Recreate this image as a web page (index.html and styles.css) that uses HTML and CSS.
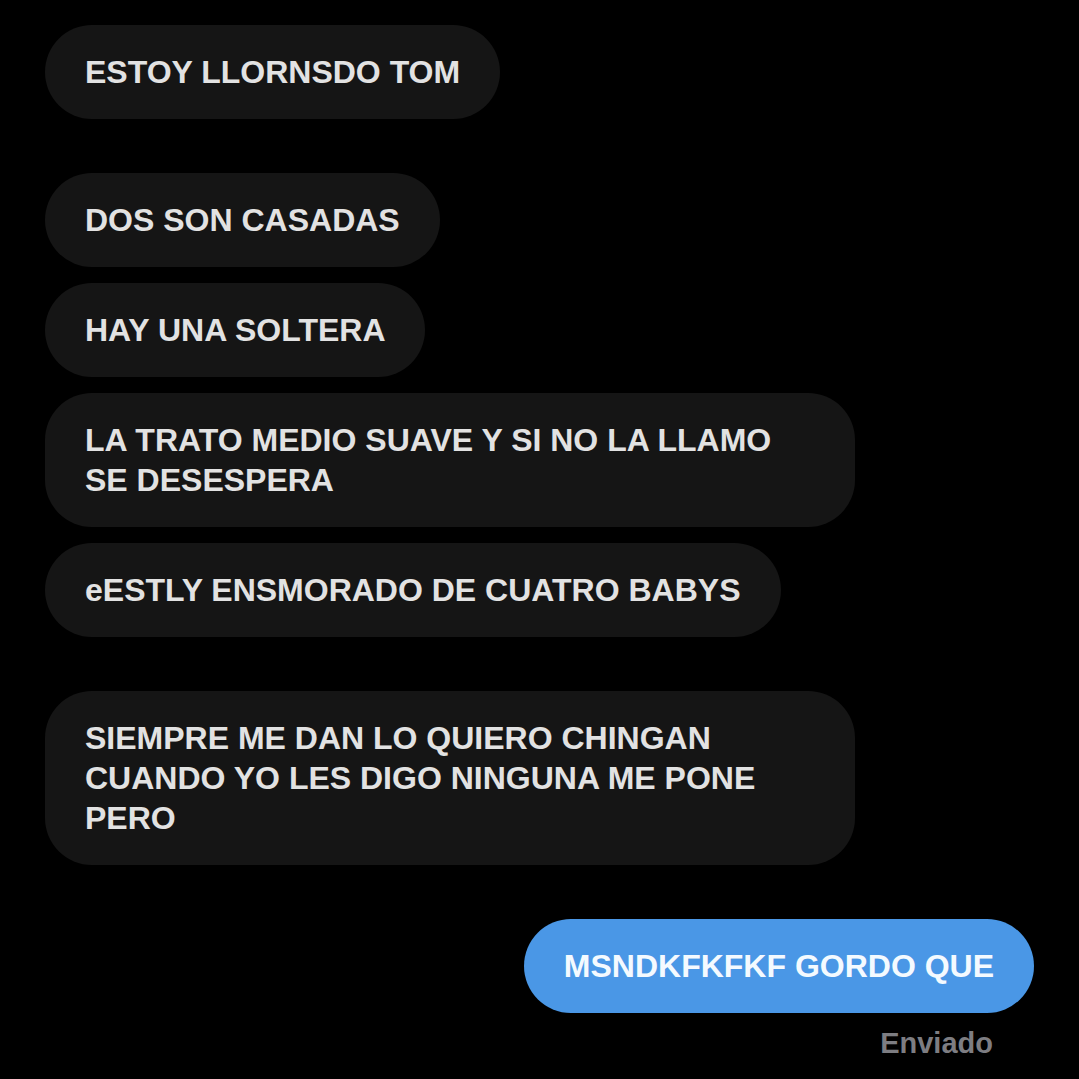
FILE: index.html
```html
<!DOCTYPE html>
<html lang="es">
<head>
    <meta charset="UTF-8">
    <meta name="viewport" content="width=device-width, initial-scale=1.0">
    <title>Mensajes</title>
    <link rel="stylesheet" href="styles.css">
</head>
<body>

    <div class="chat">
        <div class="bubble">ESTOY LLORNSDO TOM</div>

        <div class="bubble group">DOS SON CASADAS</div>
        <div class="bubble">HAY UNA SOLTERA</div>
        <div class="bubble">LA TRATO MEDIO SUAVE Y SI NO LA LLAMO SE DESESPERA</div>
        <div class="bubble">eESTLY ENSMORADO DE CUATRO BABYS</div>

        <div class="bubble group">SIEMPRE ME DAN LO QUIERO CHINGAN CUANDO YO LES DIGO NINGUNA ME PONE PERO</div>

        <div class="bubble mine group">MSNDKFKFKF GORDO QUE</div>
        <div class="status">Enviado</div>
    </div>

</body>
</html>
```

FILE: styles.css
```css
body {
    margin: 0;
    background-color: #000;
    font-family: "Liberation Sans", Arial, sans-serif;
}
.chat {
    display: flex;
    flex-direction: column;
    align-items: flex-start;
    gap: 16px;
    padding: 25px 45px 0;
}
.bubble {
    max-width: 730px;
    padding: 27px 40px;
    background-color: #151515;
    color: #e2e2e2;
    border-radius: 47px;
    font-size: 32px;
    font-weight: bold;
    line-height: 40px;
}
.group {
    margin-top: 38px;
}
.mine {
    align-self: flex-end;
    background-color: #4a97e6;
    color: #f4faff;
}
.status {
    align-self: flex-end;
    margin-top: -4px;
    margin-right: 41px;
    color: #7d7d82;
    font-size: 29px;
    font-weight: bold;
    line-height: 36px;
}
```
